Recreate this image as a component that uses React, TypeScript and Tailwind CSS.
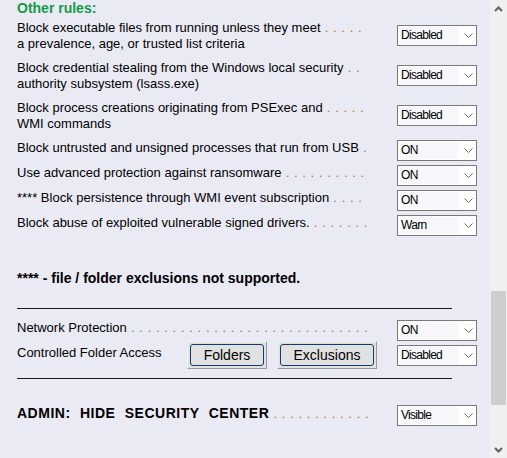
import React from 'react';

// Dropdown like the old WinForms combo box
function Combo({ value }: { value: string }) {
  return (
    <div className="w-[80px] h-[21px] shrink-0 border border-[#7a7a7a] bg-white flex items-center">
      <span className="ml-[2px] w-[58px] h-[17px] bg-[#f7f7fb] pl-[1px] text-[12px] leading-[17px] tracking-[-0.7px] text-black">
        {value}
      </span>
      <svg width="9" height="5" viewBox="0 0 9 5" className="ml-[6px]">
        <polyline points="0.5,0.5 4.5,4.5 8.5,0.5" fill="none" stroke="#6b6b6b" strokeWidth="1" />
      </svg>
    </div>
  );
}

function Dots({ n }: { n: number }) {
  return (
    <span className="text-[#a8763a] tracking-[0.55px]">{' .'.repeat(n)}</span>
  );
}

function WinButton({ label, w }: { label: string; w: string }) {
  return (
    <div className={`${w} h-[28px] bg-[#e1e1e1] border border-t-[#f4f4f4] border-l-[#f4f4f4] border-b-[#9a9a9a] border-r-[#9a9a9a] p-[2px]`}>
      <div className="h-full border border-[#0f3c74] rounded-[3px] flex items-center justify-center text-[14px] text-black">
        {label}
      </div>
    </div>
  );
}

const twoLineRules = [
  { a: 'Block executable files from running unless they meet', n: 5, b: 'a prevalence, age, or trusted list criteria', v: 'Disabled' },
  { a: 'Block credential stealing from the Windows local security', n: 2, b: 'authority subsystem (lsass.exe)', v: 'Disabled' },
  { a: 'Block process creations originating from PSExec and', n: 5, b: 'WMI commands', v: 'Disabled' },
];

const oneLineRules = [
  { t: 'Block untrusted and unsigned processes that run from USB', n: 1, v: 'ON' },
  { t: 'Use advanced protection against ransomware', n: 10, v: 'ON' },
  { t: '**** Block persistence through WMI event subscription', n: 4, v: 'ON' },
  { t: 'Block abuse of exploited vulnerable signed drivers.', n: 7, v: 'Warn' },
];

export default function App() {
  return (
    <div className="w-[507px] h-[458px] flex bg-[#eaeaf4] overflow-hidden font-['Liberation_Sans',Arial,sans-serif] text-black">
      <div className="w-[490px] pl-[17px] flex flex-col">
        <div className="h-[16px] leading-[16px] text-[14px] font-bold text-[#129a48]">Other rules:</div>

        <div className="mt-[4px] flex flex-col">
          {twoLineRules.map((r) => (
            <div key={r.a} className="h-[40px] flex items-start">
              <div className="w-[380px] text-[13px] leading-[16px] whitespace-nowrap">
                {r.a}
                <Dots n={r.n} />
                <br />
                {r.b}
              </div>
              <div className="mt-[5px]">
                <Combo value={r.v} />
              </div>
            </div>
          ))}
          {oneLineRules.map((r) => (
            <div key={r.t} className="h-[25px] flex items-start">
              <div className="w-[380px] text-[13px] leading-[16px] whitespace-nowrap">
                {r.t}
                <Dots n={r.n} />
              </div>
              <Combo value={r.v} />
            </div>
          ))}
        </div>

        <div className="mt-[30px] h-[16px] leading-[16px] text-[14px] font-bold">
          **** - file / folder exclusions not supported.
        </div>

        <div className="mt-[22px] w-[435px] h-px bg-[#1a1a1a]" />

        <div className="mt-[11px] h-[25px] flex items-start">
          <div className="w-[380px] text-[13px] leading-[16px] whitespace-nowrap">
            Network Protection
            <Dots n={29} />
          </div>
          <Combo value="ON" />
        </div>

        <div className="h-[25px] flex items-start">
          <div className="w-[170px] text-[13px] leading-[16px] whitespace-nowrap">Controlled Folder Access</div>
          <div className="-mt-[4px] flex gap-[10px]">
            <WinButton label="Folders" w="w-[80px]" />
            <WinButton label="Exclusions" w="w-[100px]" />
          </div>
          <div className="ml-[20px]">
            <Combo value="Disabled" />
          </div>
        </div>

        <div className="mt-[8px] w-[435px] h-px bg-[#1a1a1a]" />

        <div className="mt-[26px] h-[25px] flex items-start">
          <div className="w-[380px] text-[14px] leading-[16px] whitespace-nowrap">
            <span className="font-bold tracking-[0.5px] [word-spacing:5px]">ADMIN: HIDE SECURITY CENTER</span>
            <span className="text-[13px]">
              <Dots n={12} />
            </span>
          </div>
          <Combo value="Visible" />
        </div>
      </div>

      {/* scrollbar */}
      <div className="w-[17px] h-full bg-[#f0f0f0] flex flex-col items-center">
        <div className="h-[17px] w-full flex items-center justify-center">
          <svg width="9" height="6" viewBox="0 0 9 6">
            <polyline points="1,5 4.5,1.5 8,5" fill="none" stroke="#606060" strokeWidth="2" />
          </svg>
        </div>
        <div className="mt-[274px] w-[15px] h-[114px] bg-[#cdcdcd]" />
        <div className="flex-1" />
        <div className="h-[17px] w-full flex items-center justify-center">
          <svg width="9" height="6" viewBox="0 0 9 6">
            <polyline points="1,1 4.5,4.5 8,1" fill="none" stroke="#606060" strokeWidth="2" />
          </svg>
        </div>
      </div>
    </div>
  );
}
